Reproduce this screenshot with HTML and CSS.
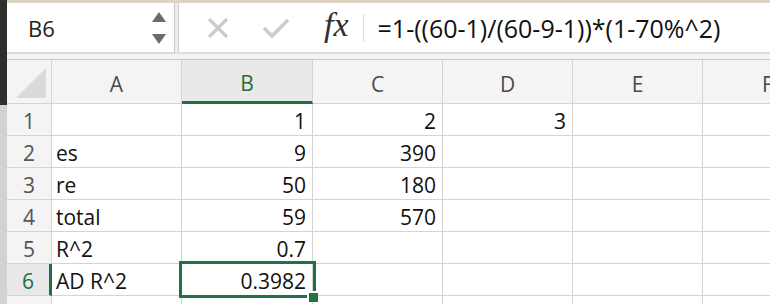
FILE: index.html
```html
<!DOCTYPE html>
<html lang="en">
<head>
    <meta charset="UTF-8">
    <title>Sheet - B6</title>
    <link rel="stylesheet" href="styles.css">
</head>
<body>

    <div class="edge">
        <div class="edge-top"></div>
    </div>

    <div class="app">
        <div class="topline"></div>

        <div class="toolbar">
            <div class="namebox">
                <span class="cell-ref">B6</span>
                <div class="spinner">
                    <svg width="14" height="10" viewBox="0 0 14 10"><polygon points="7,0 14,10 0,10" fill="#6b6b6b"/></svg>
                    <svg width="14" height="10" viewBox="0 0 14 10"><polygon points="0,0 14,0 7,10" fill="#6b6b6b"/></svg>
                </div>
            </div>
            <div class="formula">
                <svg class="icon-cancel" width="24" height="22" viewBox="0 0 24 22">
                    <path d="M3 2 L21 20 M21 2 L3 20" stroke="#cbcbcb" stroke-width="3.2" fill="none"/>
                </svg>
                <svg class="icon-ok" width="28" height="22" viewBox="0 0 28 22">
                    <path d="M2 11 L10 19 L26 3" stroke="#cbcbcb" stroke-width="3.4" fill="none"/>
                </svg>
                <span class="fx">fx</span>
                <span class="divider"></span>
                <span class="formula-text">=1-((60-1)/(60-9-1))*(1-70%^2)</span>
            </div>
        </div>

        <div class="sep"></div>

        <div class="sheet">
            <div class="corner">
                <svg width="30" height="30" viewBox="0 0 30 30"><polygon points="30,0 30,30 0,30" fill="#dadada"/></svg>
            </div>
            <div class="col-head">A</div>
            <div class="col-head active">B</div>
            <div class="col-head">C</div>
            <div class="col-head">D</div>
            <div class="col-head">E</div>
            <div class="col-head">F</div>

            <div class="row-head">1</div>
            <div class="cell"></div>
            <div class="cell num">1</div>
            <div class="cell num">2</div>
            <div class="cell num">3</div>
            <div class="cell"></div>
            <div class="cell"></div>

            <div class="row-head">2</div>
            <div class="cell">es</div>
            <div class="cell num">9</div>
            <div class="cell num">390</div>
            <div class="cell"></div>
            <div class="cell"></div>
            <div class="cell"></div>

            <div class="row-head">3</div>
            <div class="cell">re</div>
            <div class="cell num">50</div>
            <div class="cell num">180</div>
            <div class="cell"></div>
            <div class="cell"></div>
            <div class="cell"></div>

            <div class="row-head">4</div>
            <div class="cell">total</div>
            <div class="cell num">59</div>
            <div class="cell num">570</div>
            <div class="cell"></div>
            <div class="cell"></div>
            <div class="cell"></div>

            <div class="row-head">5</div>
            <div class="cell">R^2</div>
            <div class="cell num">0.7</div>
            <div class="cell"></div>
            <div class="cell"></div>
            <div class="cell"></div>
            <div class="cell"></div>

            <div class="row-head active">6</div>
            <div class="cell">AD R^2</div>
            <div class="cell num selected">0.3982<span class="handle"></span></div>
            <div class="cell"></div>
            <div class="cell"></div>
            <div class="cell"></div>
            <div class="cell"></div>

            <!-- row 7 only peeks in at the bottom -->
            <div class="row-head"></div>
            <div class="cell"></div>
            <div class="cell"></div>
            <div class="cell"></div>
            <div class="cell"></div>
            <div class="cell"></div>
            <div class="cell"></div>
        </div>
    </div>

</body>
</html>
```

FILE: styles.css
```css
body {
    margin: 0;
    width: 770px;
    height: 304px;
    overflow: hidden;
    display: flex;
    background-color: #ffffff;
    font-family: "Open Sans", "Liberation Sans", sans-serif;
    color: #111;
}

.edge {
    width: 7px;
    flex-shrink: 0;
    background-color: #d2d2d2;
}
.edge-top {
    height: 105px;
    background-color: #2e2e2e;
}

.app {
    flex: 1;
    display: flex;
    flex-direction: column;
    min-width: 0;
    overflow: hidden;
}

.topline {
    height: 3px;
    flex-shrink: 0;
    background-color: #ddd4c4;
}

/* name box + formula bar */
.toolbar {
    height: 50px;
    flex-shrink: 0;
    display: flex;
    background-color: #ececec;
}
.namebox {
    width: 168px;
    display: flex;
    align-items: center;
    justify-content: space-between;
    background-color: #fff;
    border-right: 1px solid #c9c9c9;
    border-bottom: 1px solid #d6d6d6;
    box-sizing: border-box;
    padding: 0 8px 0 21px;
}
.cell-ref {
    font-size: 22px;
    color: #222;
}
.spinner {
    display: flex;
    flex-direction: column;
    gap: 12px;
}
.spinner svg { display: block; }

.formula {
    flex: 1;
    margin-left: 3px;
    display: flex;
    align-items: center;
    background-color: #fff;
    border-left: 1px solid #d0d0d0;
    border-bottom: 1px solid #dedede;
}
.icon-cancel { margin-left: 27px; }
.icon-ok { margin-left: 32px; }
.fx {
    margin-left: 34px;
    font-family: "Liberation Serif", serif;
    font-style: italic;
    font-size: 34px;
    color: #2e2e2e;
    line-height: 1.2;
    padding-bottom: 4px;
}
.divider {
    width: 1px;
    height: 28px;
    margin-left: 14px;
    background-color: #dcdcdc;
}
.formula-text {
    margin-left: 14px;
    font-size: 25px;
    color: #111;
    white-space: nowrap;
}

.sep {
    height: 5px;
    flex-shrink: 0;
    background-color: #f3f3f3;
    border-top: 1px solid #dddddd;
    border-bottom: 1px solid #c6c6c6;
}

/* grid */
.sheet {
    display: grid;
    grid-template-columns: 45px 130px 131px 130px 130px 130px 130px;
    grid-template-rows: 44px;
    grid-auto-rows: 32px;
    font-size: 21px;
}
.sheet > div {
    box-sizing: border-box;
    border-right: 1px solid #d4d4d4;
    border-bottom: 1px solid #d4d4d4;
    white-space: nowrap;
}

.corner {
    background-color: #f4f4f4;
    display: flex;
    align-items: flex-end;
    justify-content: flex-end;
    padding: 0 5px 5px 0;
}
.corner svg { display: block; }

.col-head {
    background-color: #f4f4f4;
    color: #4a4a4a;
    display: flex;
    align-items: center;
    justify-content: center;
    padding-top: 4px;
}
.col-head.active {
    background-color: #e9e9e9;
    color: #1e6e3f;
    border-bottom: 3px solid #1e6e3f;
}

.row-head {
    background-color: #f4f4f4;
    color: #555;
    display: flex;
    align-items: center;
    justify-content: center;
    padding-top: 2px;
}
.row-head.active {
    background-color: #e8e8e8;
    color: #1e6e3f;
    border-right: 3px solid #1e6e3f;
}

.cell {
    display: flex;
    align-items: center;
    padding: 2px 6px 0 4px;
    color: #111;
}
.cell.num { justify-content: flex-end; }

.cell.selected { position: relative; }
.cell.selected::after {
    content: "";
    position: absolute;
    top: -3px;
    left: -3px;
    right: -4px;
    bottom: -3px;
    border: 3px solid #217346;
}
.handle {
    position: absolute;
    right: -6px;
    bottom: -7px;
    width: 9px;
    height: 9px;
    background-color: #217346;
    border-left: 2px solid #fff;
    border-top: 2px solid #fff;
    z-index: 1;
}
```
